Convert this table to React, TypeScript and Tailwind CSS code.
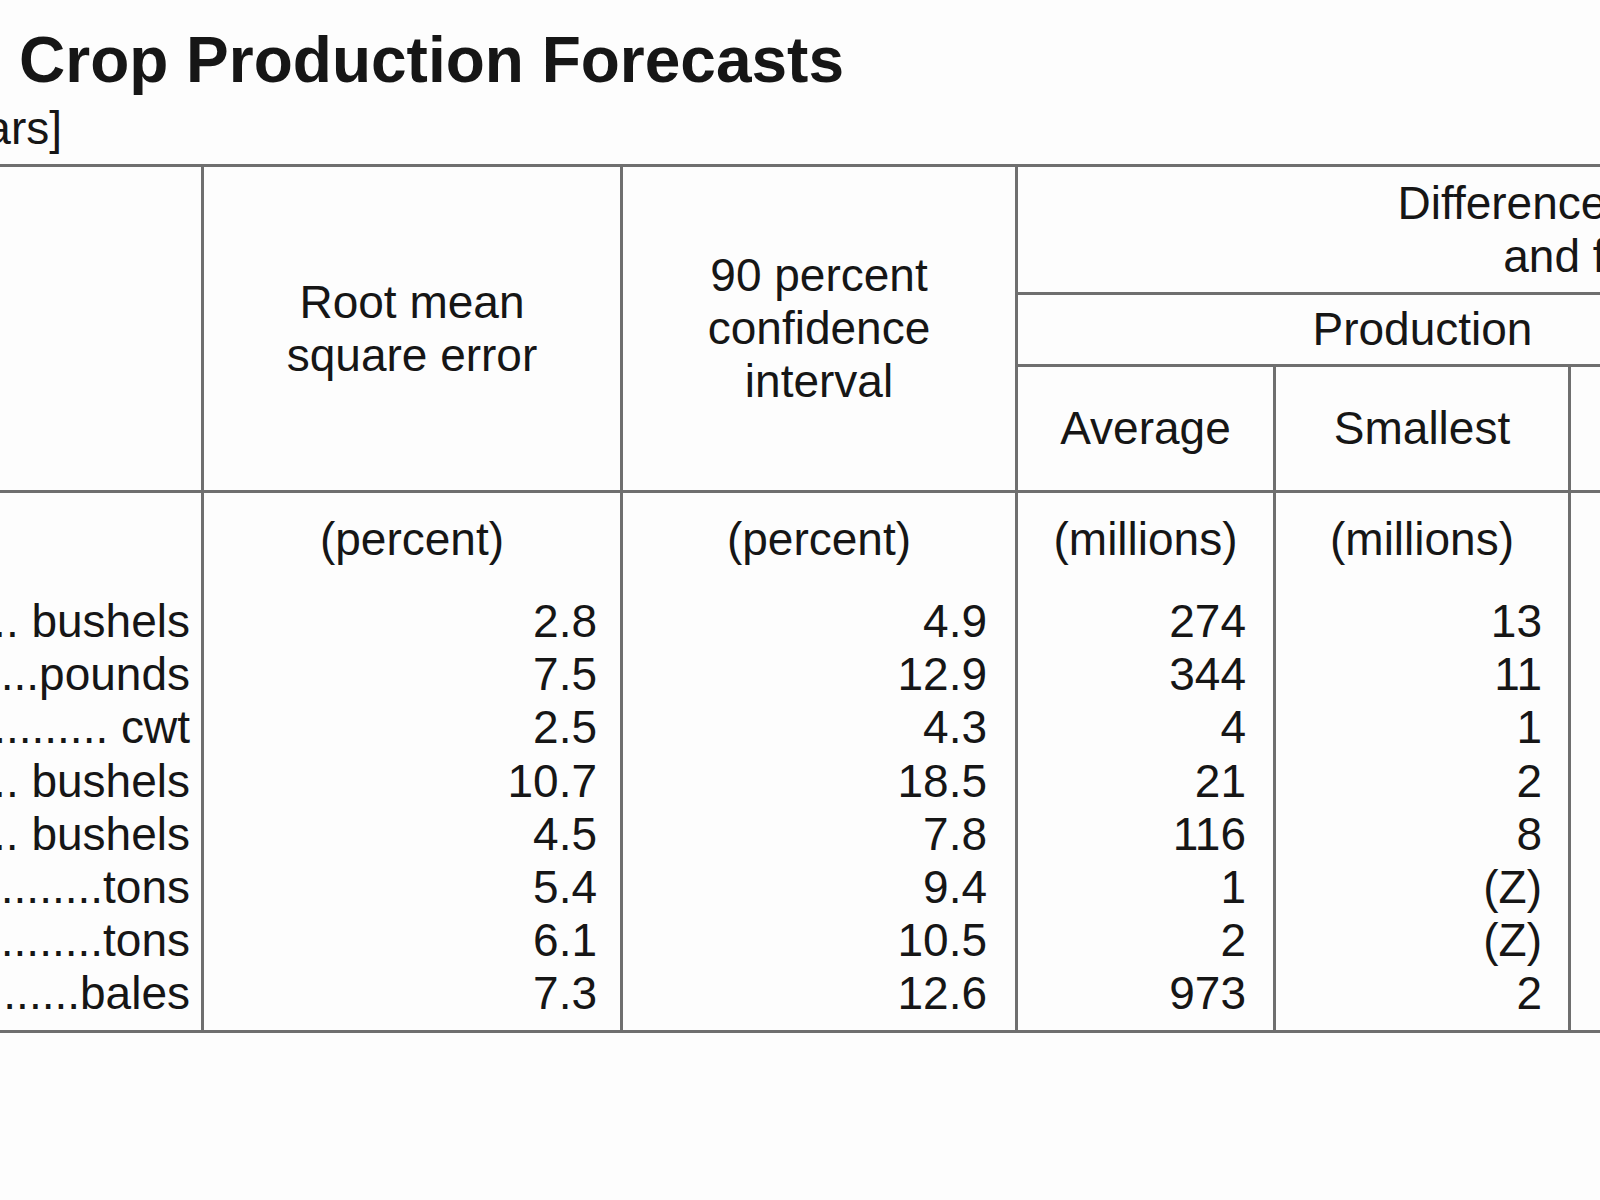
import React from "react";

const rows = [
  { label: "Corn for grain ........................ bushels", a: "2.8", b: "4.9", c: "274", d: "13", e: "1,247", f: "8", g: "12" },
  { label: "Peanuts ..................................pounds", a: "7.5", b: "12.9", c: "344", d: "11", e: "1,012", f: "10", g: "10" },
  { label: "Rice ............................................ cwt", a: "2.5", b: "4.3", c: "4", d: "1", e: "12", f: "9", g: "11" },
  { label: "Sorghum for grain ................. bushels", a: "10.7", b: "18.5", c: "21", d: "2", e: "71", f: "11", g: "9" },
  { label: "Soybeans for beans ................ bushels", a: "4.5", b: "7.8", c: "116", d: "8", e: "324", f: "9", g: "11" },
  { label: "Sugarbeets ...............................tons", a: "5.4", b: "9.4", c: "1", d: "(Z)", e: "3", f: "12", g: "8" },
  { label: "Sugarcane ................................tons", a: "6.1", b: "10.5", c: "2", d: "(Z)", e: "5", f: "7", g: "13" },
  { label: "Upland cotton .........................bales", a: "7.3", b: "12.6", c: "973", d: "2", e: "3,012", f: "12", g: "8" },
];

export default function App() {
  const v = "border-x-[3px] border-x-[#6f6f6f]";
  return (
    <div className="w-[1600px] h-[1200px] overflow-hidden bg-[#fdfdfd] text-[#161616] font-['Liberation_Sans',Arial,sans-serif]">
      <div className="pt-[29px] pl-[19px] text-[64px] leading-[63px] font-bold whitespace-nowrap">
        Crop Production Forecasts
      </div>
      <div className="mt-[10px] w-[62px] flex justify-end overflow-hidden whitespace-nowrap text-[46px] leading-[53px]">
        <span>[Based on data for the past twenty years]</span>
      </div>
      <table className="mt-[9px] -ml-[300px] w-[2649px] table-fixed border-collapse text-[46px] leading-[53px]">
        <colgroup>
          <col className="w-[501px]" />
          <col className="w-[419px]" />
          <col className="w-[395px]" />
          <col className="w-[258px]" />
          <col className="w-[295px]" />
          <col className="w-[259px]" />
          <col className="w-[261px]" />
          <col className="w-[261px]" />
        </colgroup>
        <thead>
          <tr className="h-[128px] border-t-[3px] border-t-[#6f6f6f]">
            <th rowSpan={3} className={`${v} font-normal`}></th>
            <th rowSpan={3} className={`${v} font-normal text-center align-middle`}>
              Root mean
              <br />
              square error
            </th>
            <th rowSpan={3} className={`${v} font-normal text-center align-middle`}>
              90 percent
              <br />
              confidence
              <br />
              interval
            </th>
            <th colSpan={5} className={`${v} font-normal text-center align-middle border-b-[3px] border-b-[#6f6f6f]`}>
              Difference between forecast
              <br />
              and final estimate
            </th>
          </tr>
          <tr className="h-[72px]">
            <th colSpan={3} className={`${v} font-normal text-center align-middle border-b-[3px] border-b-[#6f6f6f]`}>
              Production
            </th>
            <th colSpan={2} className={`${v} font-normal text-center align-middle border-b-[3px] border-b-[#6f6f6f]`}>
              Years
            </th>
          </tr>
          <tr className="h-[126px] border-b-[3px] border-b-[#6f6f6f]">
            <th className={`${v} font-normal text-center align-middle`}>Average</th>
            <th className={`${v} font-normal text-center align-middle`}>Smallest</th>
            <th className={`${v} font-normal text-center align-middle`}>Largest</th>
            <th className={`${v} font-normal text-center align-middle`}>
              Below
              <br />
              final
            </th>
            <th className={`${v} font-normal text-center align-middle`}>
              Above
              <br />
              final
            </th>
          </tr>
        </thead>
        <tbody className="border-b-[3px] border-b-[#6f6f6f]">
          <tr>
            <td className={`${v} pt-[20px] pb-[29px]`}></td>
            <td className={`${v} pt-[20px] pb-[29px] text-center`}>(percent)</td>
            <td className={`${v} pt-[20px] pb-[29px] text-center`}>(percent)</td>
            <td className={`${v} pt-[20px] pb-[29px] text-center`}>(millions)</td>
            <td className={`${v} pt-[20px] pb-[29px] text-center`}>(millions)</td>
            <td className={`${v} pt-[20px] pb-[29px] text-center`}>(millions)</td>
            <td className={`${v} pt-[20px] pb-[29px] text-center`}>(number)</td>
            <td className={`${v} pt-[20px] pb-[29px] text-center`}>(number)</td>
          </tr>
          {rows.map((r, i) => {
            const last = i === rows.length - 1 ? "pb-[9px]" : "";
            return (
              <tr key={i} className="leading-[53.2px]">
                <td className={`${v} ${last} pr-[11px] overflow-hidden whitespace-nowrap`}>
                  <div className="flex justify-end">
                    <span>{r.label}</span>
                  </div>
                </td>
                <td className={`${v} ${last} pr-[23px] text-right`}>{r.a}</td>
                <td className={`${v} ${last} pr-[28px] text-right`}>{r.b}</td>
                <td className={`${v} ${last} pr-[27px] text-right`}>{r.c}</td>
                <td className={`${v} ${last} pr-[26px] text-right`}>{r.d}</td>
                <td className={`${v} ${last} pr-[26px] text-right`}>{r.e}</td>
                <td className={`${v} ${last} pr-[26px] text-right`}>{r.f}</td>
                <td className={`${v} ${last} pr-[26px] text-right`}>{r.g}</td>
              </tr>
            );
          })}
        </tbody>
      </table>
    </div>
  );
}
